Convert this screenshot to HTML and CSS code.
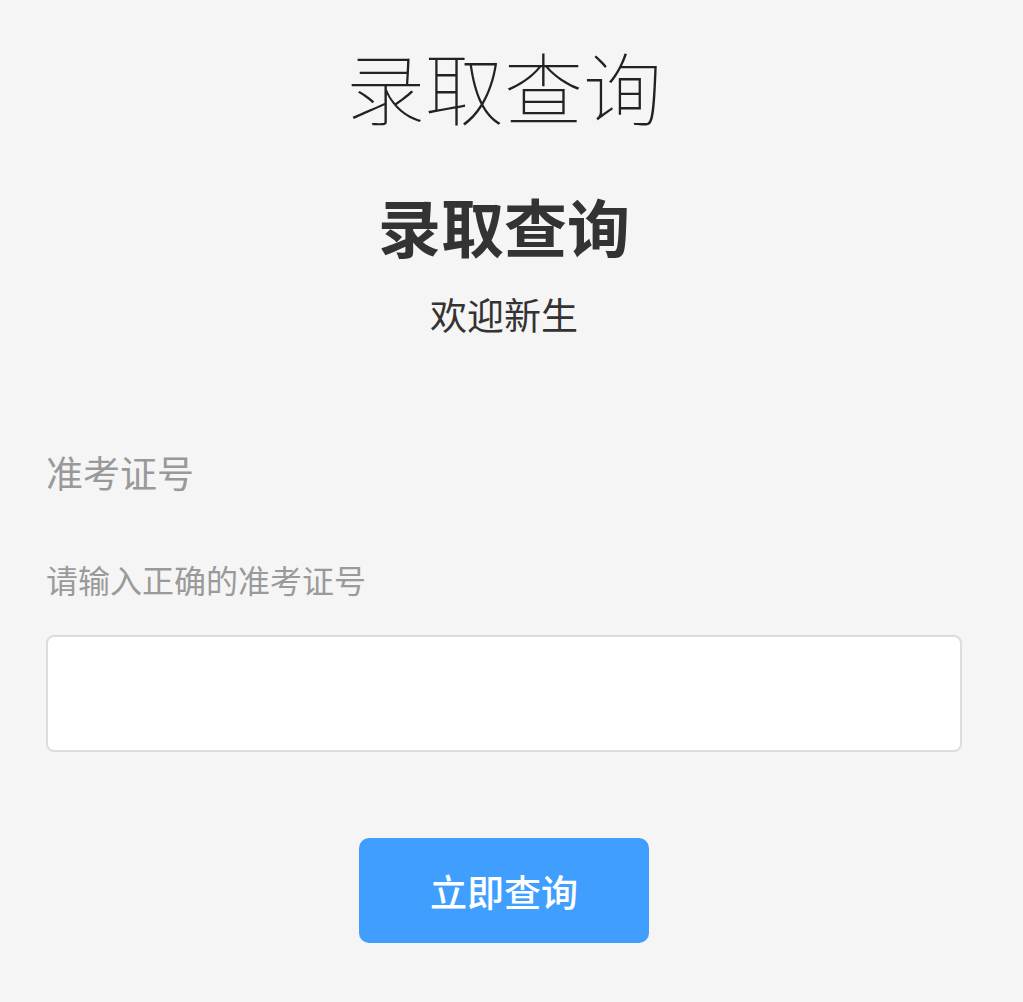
FILE: index.html
```html
<!DOCTYPE html>
<html lang="zh-CN">
<head>
    <meta charset="UTF-8">
    <meta name="viewport" content="width=device-width, initial-scale=1.0">
    <title>录取查询</title>
    <link rel="stylesheet" href="styles.css">
</head>
<body>
    <div class="page">
        <h1 class="top-title">录取查询</h1>
        <h2 class="main-title">录取查询</h2>
        <p class="welcome">欢迎新生</p>
        <form class="query-form" onsubmit="return false;">
            <label class="field-label" for="ticket">准考证号</label>
            <p class="field-hint">请输入正确的准考证号</p>
            <input class="field-input" id="ticket" type="text">
            <button class="button" type="submit">立即查询</button>
        </form>
    </div>
</body>
</html>
```

FILE: styles.css
```css
body {
    margin: 0;
    background-color: #f5f5f5;
    font-family: "Noto Sans CJK SC", "Noto Sans", sans-serif;
}
.page {
    padding: 36px 61px 40px 46px;
    display: flex;
    flex-direction: column;
}
.top-title {
    margin: 0;
    text-align: center;
    font-size: 79px;
    line-height: 100px;
    font-weight: 100;
    color: #222;
}
.main-title {
    margin: 49px 0 0;
    text-align: center;
    font-size: 63px;
    line-height: 80px;
    font-weight: 700;
    color: #333;
}
.welcome {
    margin: 24px 0 0;
    text-align: center;
    font-size: 37px;
    line-height: 50px;
    color: #333;
}
.query-form {
    display: flex;
    flex-direction: column;
}
.field-label {
    margin-top: 108px;
    font-size: 37px;
    line-height: 50px;
    color: #999;
}
.field-hint {
    margin: 60px 0 0;
    font-size: 32px;
    line-height: 44px;
    color: #9a9a9a;
}
.field-input {
    margin-top: 34px;
    height: 117px;
    box-sizing: border-box;
    background: #fff;
    border: 2px solid #dcdcdc;
    border-radius: 8px;
    outline: none;
}
.button {
    margin-top: 86px;
    align-self: center;
    width: 290px;
    height: 105px;
    background-color: #409eff;
    color: #fff;
    border: none;
    border-radius: 10px;
    font-family: inherit;
    font-size: 37px;
    font-weight: 500;
    cursor: pointer;
}
```
